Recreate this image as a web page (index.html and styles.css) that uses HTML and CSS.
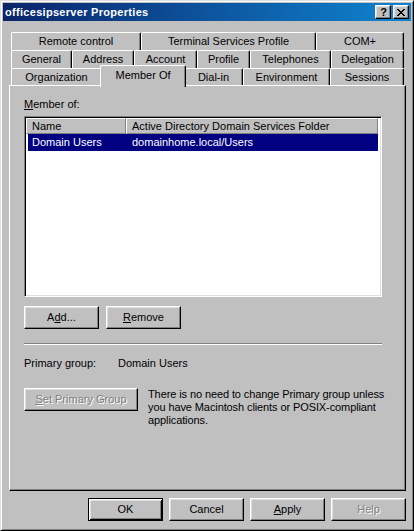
FILE: index.html
```html
<!DOCTYPE html>
<html>
<head>
<meta charset="utf-8">
<title>officesipserver Properties</title>
<link rel="stylesheet" href="styles.css">
</head>
<body>
<div class="window">
  <div class="titlebar">
    <span class="title">officesipserver Properties</span>
    <div class="caption-btns">
      <span class="cap-btn cap-help">?</span>
      <span class="cap-btn cap-close">
        <svg width="8" height="7" viewBox="0 0 8 7" shape-rendering="crispEdges">
          <path d="M0 0h2v1H0zM6 0h2v1H6zM1 1h2v1H1zM5 1h2v1H5zM2 2h4v1H2zM3 3h2v1H3zM2 4h4v1H2zM1 5h2v1H1zM5 5h2v1H5zM0 6h2v1H0zM6 6h2v1H6z" fill="#000"/>
        </svg>
      </span>
    </div>
  </div>

  <div class="tabs">
    <div class="tab-row">
      <div class="tab t-remote">Remote control</div>
      <div class="tab t-terminal">Terminal Services Profile</div>
      <div class="tab t-com">COM+</div>
    </div>
    <div class="tab-row">
      <div class="tab t-general">General</div>
      <div class="tab t-address">Address</div>
      <div class="tab t-account">Account</div>
      <div class="tab t-profile">Profile</div>
      <div class="tab t-phones">Telephones</div>
      <div class="tab t-deleg">Delegation</div>
    </div>
    <div class="tab-row tab-row-front">
      <div class="tab t-org">Organization</div>
      <div class="tab t-member selected">Member Of</div>
      <div class="tab t-dial">Dial-in</div>
      <div class="tab t-env">Environment</div>
      <div class="tab t-sess">Sessions</div>
    </div>
  </div>

  <div class="panel">
    <div class="label"><u>M</u>ember of:</div>
    <div class="listbox">
      <div class="lv-header">
        <div class="hcell h-name">Name</div>
        <div class="hcell h-folder">Active Directory Domain Services Folder</div>
      </div>
      <div class="lv-row selected-row">
        <span class="cell cell-name">Domain Users</span>
        <span class="cell cell-folder">domainhome.local/Users</span>
      </div>
    </div>
    <div class="btn-row">
      <button class="btn">A<u>d</u>d...</button>
      <button class="btn"><u>R</u>emove</button>
    </div>
    <div class="separator"></div>
    <div class="pg-row">
      <span class="pg-label">Primary group:</span>
      <span class="pg-value">Domain Users</span>
    </div>
    <div class="set-row">
      <button class="btn btn-wide disabled"><u>S</u>et Primary Group</button>
      <p class="note">There is no need to change Primary group unless<br>you have Macintosh clients or POSIX-compliant<br>applications.</p>
    </div>
  </div>

  <div class="dialog-btns">
    <button class="btn default">OK</button>
    <button class="btn">Cancel</button>
    <button class="btn"><u>A</u>pply</button>
    <button class="btn disabled">Help</button>
  </div>
</div>
</body>
</html>
```

FILE: styles.css
```css
html, body {
  margin: 0;
  padding: 0;
  background: #c0c0c0;
}

body {
  font-family: "Liberation Sans", Arial, sans-serif;
  font-size: 11px;
  line-height: 13px;
  color: #000;
}

u {
  text-decoration: underline;
}

.window {
  box-sizing: border-box;
  width: 414px;
  height: 531px;
  border: 1px solid;
  border-color: #dfdfdf #000 #000 #dfdfdf;
  box-shadow: inset 1px 1px #fff, inset -1px -1px #808080;
  padding: 2px;
  background: #c0c0c0;
}

/* Title bar */
.titlebar {
  height: 18px;
  display: flex;
  align-items: center;
  background: linear-gradient(to right, #0a246a, #1084d0);
  color: #fff;
  font-weight: bold;
  padding-left: 2px;
}

.title {
  flex: 1;
  line-height: 18px;
  letter-spacing: 0.3px;
}

.caption-btns {
  display: flex;
  gap: 2px;
  margin-right: 2px;
}

.cap-btn {
  box-sizing: border-box;
  width: 16px;
  height: 14px;
  display: flex;
  align-items: center;
  justify-content: center;
  background: #c0c0c0;
  border: 1px solid;
  border-color: #fff #000 #000 #fff;
  box-shadow: inset -1px -1px #808080, inset 1px 1px #dfdfdf;
  color: #000;
  font-weight: bold;
  font-size: 11px;
  line-height: 12px;
}

.cap-help {
  padding-left: 1px;
}

/* Tabs */
.tabs {
  width: 393px;
  margin: 11px 0 0 8px;
}

.tab-row {
  display: flex;
  height: 18px;
}

.tab-row-front {
  height: 17px;
}

.tab {
  box-sizing: border-box;
  flex: none;
  height: 18px;
  border-left: 1px solid #fff;
  border-top: 1px solid #fff;
  border-right: 1px solid #000;
  border-radius: 2px 2px 0 0;
  box-shadow: inset -1px 0 #808080;
  background: #c0c0c0;
  text-align: center;
  line-height: 16px;
  white-space: nowrap;
}

.tab-row-front .tab {
  height: 17px;
}

.tab-row-front .tab.selected {
  position: relative;
  height: 22px;
  margin: -3px -2px 0;
  line-height: 18px;
}

.t-remote { width: 130px; }
.t-terminal { width: 175px; }
.t-com { width: 88px; }

.t-general { width: 61px; }
.t-address { width: 62px; }
.t-account { width: 63px; }
.t-profile { width: 53px; }
.t-phones { width: 81px; }
.t-deleg { width: 73px; }

.t-org { width: 91px; }
.t-member { width: 82px; }
.t-dial { width: 59px; }
.t-env { width: 87px; }
.t-sess { width: 74px; }

.tab-row-front .t-member.selected { width: 86px; }

/* Panel */
.panel {
  box-sizing: border-box;
  width: 397px;
  height: 406px;
  margin-left: 6px;
  border: 1px solid;
  border-color: #fff #000 #000 #fff;
  box-shadow: inset -1px -1px #808080;
  padding: 12px 0 0 14px;
}

.listbox {
  box-sizing: border-box;
  width: 358px;
  height: 181px;
  margin-top: 5px;
  background: #fff;
  border: 1px solid;
  border-color: #808080 #fff #fff #808080;
  box-shadow: inset 1px 1px #000, inset -1px -1px #dfdfdf;
  padding: 1px;
}

.lv-header {
  display: flex;
  height: 16px;
}

.hcell {
  box-sizing: border-box;
  height: 16px;
  background: #c0c0c0;
  border: 1px solid;
  border-color: #fff #808080 #808080 #fff;
  padding-left: 5px;
  line-height: 14px;
  white-space: nowrap;
}

.h-name { width: 100px; }
.h-folder { width: 252px; }

.lv-row {
  display: flex;
  width: 350px;
  height: 17px;
  margin-left: 2px;
  line-height: 17px;
}

.selected-row {
  background: #000080;
  color: #fff;
}

.cell {
  box-sizing: border-box;
  white-space: nowrap;
}

.cell-name {
  width: 98px;
  padding-left: 4px;
}

.cell-folder {
  padding-left: 6px;
}

/* Buttons */
.btn {
  box-sizing: border-box;
  width: 75px;
  height: 23px;
  padding: 0;
  margin: 0;
  display: flex;
  align-items: center;
  justify-content: center;
  font-family: inherit;
  font-size: 11px;
  line-height: 13px;
  color: #000;
  background: #c0c0c0;
  border: 1px solid;
  border-color: #fff #000 #000 #fff;
  box-shadow: inset -1px -1px #808080, inset 1px 1px #dfdfdf;
  border-radius: 0;
}

.btn.default {
  border-color: #000;
  box-shadow: inset 1px 1px #fff, inset -1px -1px #000, inset 2px 2px #dfdfdf, inset -2px -2px #808080;
}

.btn.disabled {
  color: #808080;
  text-shadow: 1px 1px 0 #fff;
}

.btn-wide {
  width: 114px;
}

.btn-row {
  display: flex;
  gap: 7px;
  margin-top: 9px;
}

.separator {
  width: 358px;
  height: 0;
  border-top: 1px solid #808080;
  border-bottom: 1px solid #fff;
  margin-top: 14px;
}

.pg-row {
  display: flex;
  margin-top: 12px;
}

.pg-label {
  width: 94px;
}

.set-row {
  display: flex;
  align-items: flex-start;
  margin-top: 18px;
}

.note {
  margin: 0 0 0 10px;
  letter-spacing: -0.1px;
}

.dialog-btns {
  display: flex;
  justify-content: flex-end;
  gap: 6px;
  margin: 7px 5px 0 0;
}
```
